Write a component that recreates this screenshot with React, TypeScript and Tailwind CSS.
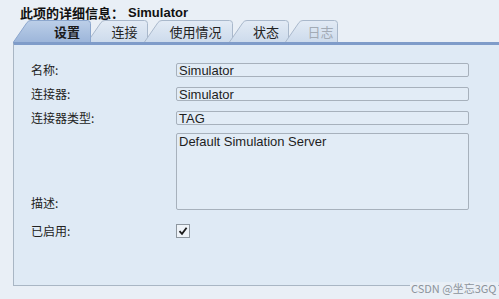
const TABS = [
  { label: '设置', width: 78, textPad: 'pl-[30px]', active: true, disabled: false },
  { label: '连接', width: 61, textPad: 'pl-[14px]', active: false, disabled: false },
  { label: '使用情况', width: 89, textPad: 'pl-[14px]', active: false, disabled: false },
  { label: '状态', width: 60, textPad: 'pl-[14px]', active: false, disabled: false },
  { label: '日志', width: 53, textPad: 'pl-[18px]', active: false, disabled: true },
]

function TabShape({ width, active }: { width: number; active: boolean }) {
  const h = 22
  const d = `M0.5,${h} L14,2.5 Q15.5,0.5 18,0.5 L${width - 3.5},0.5 Q${width - 0.5},0.5 ${width - 0.5},3.5 L${width - 0.5},${h}`
  const id = active ? 'tab-active' : 'tab-idle'
  return (
    <svg className="absolute inset-0" width={width} height={h} viewBox={`0 0 ${width} ${h}`}>
      <defs>
        <linearGradient id={id} x1="0" y1="0" x2="0" y2="1">
          <stop offset="0" stopColor={active ? '#bccfe8' : '#e3ebf5'} />
          <stop offset="1" stopColor={active ? '#9db6da' : '#cddbec'} />
        </linearGradient>
      </defs>
      <path d={d + ' Z'} fill={`url(#${id})`} />
      <path d={d} fill="none" stroke={active ? '#8ba6cd' : '#a9b8cb'} strokeWidth="1" />
    </svg>
  )
}

function Field({ value }: { value: string }) {
  return (
    <div className="flex h-[14px] w-[293px] items-center rounded-[2px] border border-[#a7b1bc] bg-[#e2ecf6] pl-[2px] font-['Liberation_Sans',sans-serif] text-[13px] leading-none text-[#1e1e1e]">
      {value}
    </div>
  )
}

function Label({ text }: { text: string }) {
  return <span className="w-[162px] pl-[17px] leading-[14px]">{text}</span>
}

export default function App() {
  return (
    <div
      className="relative h-[299px] w-[499px] overflow-hidden bg-[#e9eff6]"
      style={{ fontFamily: '"Noto Sans CJK SC", "Liberation Sans", sans-serif' }}
    >
      <div className="flex h-[20px] items-center pl-[20px] pt-[4px] text-[13px] font-bold leading-none text-[#111]">
        <span>此项的详细信息：</span>
        <span className="ml-[4px] font-['Liberation_Sans',sans-serif]">Simulator</span>
      </div>

      <div className="flex h-[22px] pl-[13px]">
        {TABS.map((tab, i) => (
          <div
            key={tab.label}
            className={`relative h-[22px] ${i > 0 ? '-ml-[4px]' : ''} ${tab.active ? 'z-10' : ''}`}
            style={{ width: tab.width }}
          >
            <TabShape width={tab.width} active={tab.active} />
            <div
              className={`relative flex h-full items-center justify-center pt-[1px] ${tab.textPad} text-[13px] ${
                tab.active ? 'font-bold text-[#1a1a1a]' : tab.disabled ? 'text-[#a3abb5]' : 'text-[#222]'
              }`}
            >
              {tab.label}
            </div>
          </div>
        ))}
      </div>

      <div className="ml-[13px] h-[244px] border-t-[3px] border-b border-l border-t-[#7f9cc9] border-b-[#a9b6c4] border-l-[#a9b6c4] bg-[#dfeaf5] pt-[18px] text-[12px] text-[#222]">
        <div className="flex flex-col">
          <div className="flex h-[14px] items-center">
            <Label text="名称:" />
            <Field value="Simulator" />
          </div>
          <div className="mt-[10px] flex h-[14px] items-center">
            <Label text="连接器:" />
            <Field value="Simulator" />
          </div>
          <div className="mt-[10px] flex h-[14px] items-center">
            <Label text="连接器类型:" />
            <Field value="TAG" />
          </div>
          <div className="mt-[8px] flex items-end">
            <span className="w-[162px] pl-[17px] leading-[14px]">描述:</span>
            <div className="h-[77px] w-[293px] rounded-[2px] border border-[#a7b1bc] bg-[#e2ecf6] pl-[2px] pt-[1px] font-['Liberation_Sans',sans-serif] text-[13px] leading-[14px] text-[#1e1e1e]">
              Default Simulation Server
            </div>
          </div>
          <div className="mt-[14px] flex h-[14px] items-center">
            <Label text="已启用:" />
            <div className="flex h-[14px] w-[14px] items-center justify-center border border-[#8e979f] bg-[#eef3f8]">
              <svg width="10" height="10" viewBox="0 0 10 10">
                <path d="M1.5 5.2 L4 7.8 L8.6 1.8" fill="none" stroke="#1b1b1b" strokeWidth="1.8" />
              </svg>
            </div>
          </div>
        </div>
      </div>

      <div className="absolute left-[410px] top-[282px] bg-[#e9eff6] px-[1px] text-[11px] leading-[12px] text-[#8c939b]">
        CSDN @坐忘3GQ
      </div>
    </div>
  )
}
